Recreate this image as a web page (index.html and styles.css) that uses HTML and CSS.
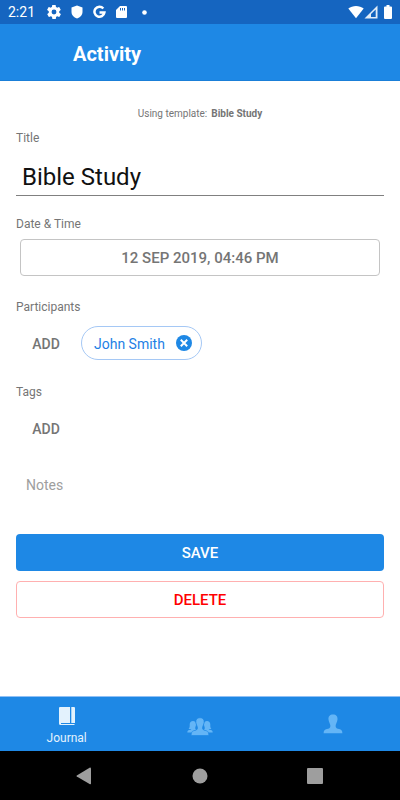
FILE: index.html
```html
<!DOCTYPE html>
<html lang="en">
<head>
<meta charset="utf-8">
<meta name="viewport" content="width=device-width, initial-scale=1">
<title>Activity</title>
<link rel="stylesheet" href="styles.css">
</head>
<body>
<div class="status-bar">
  <span class="clock">2:21</span>
  <div class="status-icons">
    <svg width="14" height="14" viewBox="2 2 20 20"><path fill="#fff" fill-rule="evenodd" d="M19.4 13c0-.3.1-.6.1-1s0-.7-.1-1l2.1-1.7c.2-.1.2-.4.1-.6l-2-3.5c-.1-.2-.4-.3-.6-.2l-2.500 1c-.5-.4-1.100-.7-1.700-1l-.4-2.600c0-.2-.2-.4-.5-.4h-4c-.2 0-.5.200-.5.400l-.4 2.600c-.6.300-1.200.600-1.700 1l-2.500-1c-.2-.1-.5 0-.6.200l-2 3.500c-.1.200-.1.500.1.600L4.600 11c0 .3-.1.700-.1 1s0 .7.100 1l-2.100 1.700c-.2.100-.2.400-.1.600l2 3.500c.1.200.4.300.6.200l2.500-1c.5.400 1.100.700 1.700 1l.4 2.600c0 .2.300.4.500.4h4c.3 0 .5-.2.500-.4l.4-2.600c.6-.3 1.200-.6 1.700-1l2.500 1c.2.100.5 0 .6-.2l2-3.500c.1-.2.100-.5-.1-.6zM12 15.500a3.500 3.500 0 1 1 0-7 3.500 3.500 0 0 1 0 7z"/></svg>
    <svg width="12" height="14" viewBox="0 0 12 14"><path fill="#fff" d="M6 .5 11.500 2.500V7c0 3-2.300 5.500-5.500 6.500C2.800 12.500.5 10 .5 7V2.500z"/></svg>
    <svg width="13" height="14" viewBox="0 0 13 14"><path fill="none" stroke="#fff" stroke-width="2.500" d="M10.300 3.500A5 5 0 1 0 11.400 7.500H6.500"/></svg>
    <svg width="11" height="14" viewBox="0 0 11 14"><path fill="#fff" fill-rule="evenodd" d="M4 1h6q1 0 1 1v10q0 1-1 1H1q-1 0-1-1V5zM4 3v2.500h1V3zm2 0v2.500h1V3zm2 0v2.500h1V3z"/></svg>
    <svg class="dot" width="5" height="5" viewBox="0 0 5 5"><circle cx="2.500" cy="2.500" r="2.300" fill="#fff"/></svg>
  </div>
  <div class="signal-icons">
    <svg width="16" height="14" viewBox="0 0 16 14"><path fill="#fff" d="M8 13.300.3 3.600C4.500 0 11.500 0 15.700 3.600z"/></svg>
    <svg width="14" height="14" viewBox="0 0 14 14"><path fill="#e3edf8" d="M13.500.5v13H.5z"/><path fill="#1565c0" d="M11.700 4.500V12H7V9z"/></svg>
    <svg class="battery" width="8" height="14" viewBox="0 0 8 14"><path fill="#fff" d="M2.500 0h3v1.500H7q1 0 1 1V13q0 1-1 1H1q-1 0-1-1V2.500q0-1 1-1h1.500z"/></svg>
  </div>
</div>
<header class="app-bar"><h1>Activity</h1></header>
<main class="content">
  <p class="template"><span>Using template:</span> <b>Bible Study</b></p>
  <form class="form">
    <label class="label" for="title">Title</label>
    <input class="title-input" id="title" type="text" value="Bible Study">
    <div class="label" id="date-label">Date &amp; Time</div>
    <button class="btn date" type="button" aria-describedby="date-label">12 SEP 2019, 04:46 PM</button>
    <div class="label">Participants</div>
    <div class="chips">
      <button class="add" type="button">ADD</button>
      <button class="chip" type="button"><span>John Smith</span>
        <svg width="16" height="16" viewBox="0 0 16 16"><circle cx="8" cy="8" r="8" fill="#1e88e5"/><path stroke="#fff" stroke-width="2" d="m4.800 4.800 6.400 6.400m0-6.400-6.400 6.400"/></svg>
      </button>
    </div>
    <div class="label">Tags</div>
    <div class="chips">
      <button class="add" type="button">ADD</button>
    </div>
    <textarea class="notes" rows="1" placeholder="Notes" aria-label="Notes"></textarea>
    <button class="btn save" type="submit">SAVE</button>
    <button class="btn delete" type="button">DELETE</button>
  </form>
</main>
<nav class="tabs">
  <a class="tab active" href="#journal">
    <svg width="16" height="19" viewBox="0 0 16 19"><path fill="#e3f2fd" d="M1 0h10v16H2v1h13.500v1H1.500Q0 18 0 16.500V1q0-1 1-1zM12.300 0H15q1 0 1 1v15h-3.700z"/></svg>
    <span>Journal</span>
  </a>
  <a class="tab" href="#groups" aria-label="Groups">
    <svg class="group" width="26" height="20" viewBox="0 0 26 20"><g fill="#64b5f6"><path d="M6 4c2 0 3.200 1.200 3 3.500-.1 1.800-.8 2.500-.8 3.800 0 .8 1 1 1.300 1.200-2 .7-3.500 1.500-4 3H.3c0-2 1-2.200 3-2.700.7-.2.900-.5.900-.9H1.600c1.200-1 1.100-2.300 1.100-4.400C2.700 5.300 4 4 6 4z"/><path d="M20 4c-2 0-3.200 1.200-3 3.500.1 1.800.8 2.500.8 3.800 0 .8-1 1-1.300 1.200 2 .7 3.500 1.500 4 3h5.200c0-2-1-2.200-3-2.700-.7-.2-.9-.5-.9-.9h2.600c-1.200-1-1.100-2.300-1.100-4.400C23.300 5.300 22 4 20 4z"/><path stroke="#1e88e5" stroke-width=".7" d="M13 .7c3 0 4.400 1.800 4.100 4.700-.2 2.200-1.600 4-1.600 5.600 0 1.700 1.200 2 3 2.500 2.300.6 3.200 1.300 3.300 5H4.200c.1-3.700 1-4.400 3.300-5 1.800-.5 3-.8 3-2.500 0-1.600-1.400-3.400-1.600-5.600C8.600 2.500 10 .7 13 .7z"/></g></svg>
  </a>
  <a class="tab" href="#profile" aria-label="Profile">
    <svg width="20" height="20" viewBox="0 0 20 20"><path fill="#64b5f6" d="M10 .5c3.200 0 4.800 2 4.500 5-.2 2.600-1.900 4.500-1.900 6.500 0 2.100 1.600 2.600 3.500 3.100 2.200.6 3.100 1.200 3.300 4.200H.6c.2-3 1.100-3.600 3.300-4.200 1.900-.5 3.500-1 3.500-3.100 0-2-1.700-3.900-1.900-6.500C5.200 2.500 6.800.5 10 .5z"/></svg>
  </a>
</nav>
<div class="system-nav">
  <button type="button" aria-label="Back"><svg width="16" height="18" viewBox="0 0 16 18"><path fill="#9e9e9e" d="M14 .5q1 0 1 1v15q0 1-1 .7L.8 9.500q-.8-.5 0-1z"/></svg></button>
  <button type="button" aria-label="Home"><svg width="16" height="16" viewBox="0 0 16 16"><circle cx="8" cy="8" r="7.500" fill="#9e9e9e"/></svg></button>
  <button type="button" aria-label="Recent apps"><svg width="16" height="16" viewBox="0 0 16 16"><rect width="16" height="16" rx="1" fill="#9e9e9e"/></svg></button>
</div>
</body>
</html>
```

FILE: styles.css
```css
* { box-sizing: border-box; }

body {
  margin: 0;
  min-height: 100vh;
  display: flex;
  flex-direction: column;
  background: #fff;
  color: #757575;
  font-family: Roboto, "Liberation Sans", sans-serif;
}

svg { display: block; }

button {
  border: 0;
  padding: 0;
  background: none;
  font-family: inherit;
}

.status-bar {
  display: flex;
  align-items: center;
  height: 24px;
  padding: 0 8px;
  background: #1565c0;
  color: #fff;
}

.clock {
  width: 28px;
  font-size: 14px;
  line-height: 26px;
}

.status-icons {
  display: flex;
  align-items: center;
  gap: 10px;
  margin-left: 11px;
}

.dot { margin-left: 5px; }

.signal-icons {
  display: flex;
  align-items: center;
  margin-left: auto;
}

.battery { margin-left: 6px; }

.app-bar {
  display: flex;
  align-items: center;
  height: 57px;
  padding: 0 73px;
  background: #1e88e5;
  border-bottom: 1px solid #1a7fd8;
  color: #fff;
}

h1 {
  margin: 0;
  padding-top: 4px;
  font-size: 20px;
  font-weight: 700;
}

.content {
  flex: 1;
  padding: 25px 16px;
}

.template {
  display: flex;
  justify-content: center;
  gap: 4px;
  margin: 0 0 6px;
  font-size: 10px;
  line-height: 16px;
}

.template b { font-weight: 700; }

.form {
  display: flex;
  flex-direction: column;
}

.label {
  font-size: 12px;
  line-height: 20px;
}

.title-input {
  width: 100%;
  height: 38px;
  margin: 10px 0 18px;
  padding: 0 6px;
  border: 0;
  border-bottom: 1px solid #808080;
  border-radius: 0;
  background: none;
  color: #111;
  font-family: inherit;
  font-size: 24px;
  outline: none;
}

.btn {
  height: 37px;
  border-radius: 4px;
  font-size: 15px;
  font-weight: 500;
}

.date {
  margin: 5px 4px 21px;
  border: 1px solid #c4c4c4;
  color: #757575;
}

.chips {
  display: flex;
  align-items: center;
  gap: 5px;
  height: 34px;
  margin: 9px 0 22px;
}

.add {
  width: 60px;
  height: 34px;
  padding-top: 2px;
  color: #757575;
  font-size: 14px;
  font-weight: 500;
}

.chip {
  display: flex;
  align-items: center;
  gap: 11px;
  height: 34px;
  padding: 0 9px 0 12px;
  border: 1px solid #a5c8f5;
  border-radius: 17px;
  color: #1e7fe5;
  font-size: 14px;
}

.chip span { padding-top: 2px; }

.notes {
  height: 34px;
  margin: 1px 0 32px;
  padding: 7px 10px;
  border: 0;
  background: none;
  font-family: inherit;
  font-size: 14px;
  line-height: 20px;
  resize: none;
  outline: none;
}

.notes::placeholder { color: #9e9e9e; }

.save {
  margin-bottom: 10px;
  background: #1e88e5;
  color: #fff;
}

.delete {
  border: 1px solid #ffb0b0;
  color: #f00;
}

.tabs {
  display: grid;
  grid-template-columns: repeat(3, 1fr);
  height: 55px;
  border-top: 1px solid #90c0f5;
  background: #1e88e5;
}

.tab {
  display: flex;
  flex-direction: column;
  align-items: center;
  justify-content: center;
  gap: 4px;
  color: #e3f2fd;
  font-size: 12px;
  line-height: 16px;
  text-decoration: none;
}

.active { padding-top: 5px; }

.group { margin-top: 5px; }

.system-nav {
  display: flex;
  align-items: center;
  justify-content: space-between;
  height: 49px;
  padding: 0 77px 0 76px;
  background: #000;
}
```
